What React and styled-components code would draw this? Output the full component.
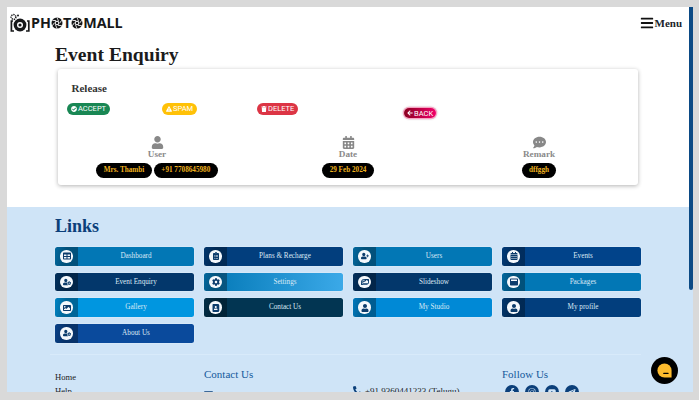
import styled, { createGlobalStyle } from 'styled-components';
import {
  FaAddressBook, FaArrowLeft, FaBars, FaCalendarAlt, FaCheckCircle, FaClipboardList, FaCog,
  FaCommentDots, FaEnvelope, FaExclamationTriangle, FaFacebookF, FaImage, FaImages, FaInstagram,
  FaPhoneAlt, FaTable, FaTelegramPlane, FaTrash, FaUser, FaUserCog, FaUserPlus, FaWindowMaximize,
  FaYoutube,
} from 'react-icons/fa';

const navy = '#0b3f7a';

const links = [
  { label: 'Dashboard', icon: FaTable, bg: '#0277b5' },
  { label: 'Plans & Recharge', icon: FaClipboardList, bg: '#023e7d' },
  { label: 'Users', icon: FaUserPlus, bg: '#0277b5' },
  { label: 'Events', icon: FaCalendarAlt, bg: '#01438a' },
  { label: 'Event Enquiry', icon: FaUserCog, bg: '#03376b' },
  { label: 'Settings', icon: FaCog, bg: 'linear-gradient(90deg, #0277b5, #3ba9e8)' },
  { label: 'Slideshow', icon: FaImages, bg: '#03376b' },
  { label: 'Packages', icon: FaWindowMaximize, bg: '#0277b5' },
  { label: 'Gallery', icon: FaImage, bg: '#0096e0' },
  { label: 'Contact Us', icon: FaAddressBook, bg: '#023552' },
  { label: 'My Studio', icon: FaUser, bg: '#0089d6' },
  { label: 'My profile', icon: FaUser, bg: '#023e7d' },
  { label: 'About Us', icon: FaUserCog, bg: '#0a4a9c' },
];

const GlobalStyle = createGlobalStyle`
  html, body {
    margin: 0;
    height: 100%;
    overflow: hidden;
    background: #d9d9d9;
  }
  body {
    font-family: "Liberation Serif", "Times New Roman", serif;
  }
`;

const Frame = styled.div`
  position: relative;
  margin: 7px 0 0 7px;
  width: 686px;
  height: 385px;
  overflow: hidden;
  background: #fff;
`;

const ScrollThumb = styled.div`
  position: absolute;
  top: 0;
  right: 0;
  width: 4px;
  height: 283px;
  background: #0b4a85;
  border-radius: 0 0 2px 2px;
`;

const Header = styled.header`
  display: flex;
  justify-content: space-between;
  align-items: center;
  height: 31px;
  padding: 0 11px 0 2px;
`;

const Logo = styled.div`
  display: flex;
  align-items: center;
  font-family: "Open Sans", sans-serif;
  font-weight: 700;
  font-size: 14.3px;
  line-height: 20px;
  color: #17181a;
`;

const MenuButton = styled.div`
  display: flex;
  align-items: center;
  gap: 1px;
  font-size: 11px;
  font-weight: 700;
  color: #20232a;
  margin-top: 1px;

  > svg {
    font-size: 14px;
    color: #111;
  }
`;

const Main = styled.main`
  box-sizing: border-box;
  height: 169px;
  padding: 5px 52px 0 48px;
`;

const Title = styled.h1`
  margin: 0 0 2px;
  font-size: 19.6px;
  line-height: 24px;
  font-weight: 700;
  color: #1b1b1b;
`;

const Card = styled.section`
  margin: 0 3px 0 2.5px;
  height: 116px;
  padding: 12px 4px 0 9px;
  box-sizing: border-box;
  background: #fff;
  border-radius: 3px;
  box-shadow: 0 1px 4px rgba(0, 0, 0, 0.3);
`;

const CardTitle = styled.h2`
  margin: 0 0 8px 5px;
  font-size: 11px;
  line-height: 14px;
  font-weight: 700;
  color: #333;
`;

const Actions = styled.div`
  display: grid;
  grid-template-columns: repeat(4, 95px);
  align-items: start;
  height: 23px;
`;

const Badge = styled.span`
  justify-self: start;
  display: inline-flex;
  align-items: center;
  gap: 1.5px;
  height: 11.5px;
  padding: 0 3.5px 0 4px;
  border-radius: 6px;
  background: ${(props) => props.$bg};
  font-family: Roboto, sans-serif;
  font-size: 7.5px;
  color: #fff;

  > svg {
    font-size: 6px;
  }
`;

const BackBadge = styled(Badge)`
  margin: 5px 0 0 52px;
  height: 10px;
  padding: 0 3px;
  background: linear-gradient(90deg, #8b0020, #f0006a);
  box-shadow: 0 0 0 1.2px #f7a3c2, 0 0 2px 1.5px rgba(0, 0, 0, 0.12);
`;

const Details = styled.div`
  display: grid;
  grid-template-columns: repeat(3, 191px);
  margin: 10px 0 0 -5px;
`;

const Detail = styled.div`
  display: flex;
  flex-direction: column;
  align-items: center;
  color: #888;

  > svg {
    font-size: 13px;
  }
`;

const DetailLabel = styled.div`
  font-size: 9.2px;
  line-height: 11px;
  font-weight: 700;
  margin: 0 0 3px;
  color: #8a8a8a;
`;

const Pills = styled.div`
  display: flex;
  gap: 2px;
`;

const Pill = styled.span`
  padding: 0 7.5px;
  line-height: 15px;
  border-radius: 8px;
  background: #000;
  color: #efb21f;
  font-size: 7.2px;
  font-weight: 700;
`;

const LinksSection = styled.section`
  background: #cfe4f7;
  padding: 9px 52px 0 48px;
  height: 200px;
`;

const SectionTitle = styled.h2`
  margin: 0 0 10px;
  font-size: 18px;
  line-height: 21px;
  font-weight: 700;
  color: ${navy};
`;

const LinkGrid = styled.div`
  display: grid;
  grid-template-columns: repeat(4, 139px);
  gap: 7px 10px;
`;

const LinkButton = styled.a`
  display: flex;
  height: 18.7px;
  border-radius: 2.5px;
  overflow: hidden;
  background: ${(props) => props.$bg};
  box-shadow: 0 0 1.5px rgba(255, 255, 255, 0.8);
  color: #dbe9f5;
  font-size: 7.2px;
  line-height: 18.7px;
`;

const LinkIcon = styled.span`
  flex: 0 0 23px;
  display: flex;
  align-items: center;
  justify-content: center;
  background: linear-gradient(100deg, rgba(0, 0, 0, 0.12), rgba(0, 0, 0, 0.32) 45%);
`;

const IconDisc = styled.span`
  display: flex;
  align-items: center;
  justify-content: center;
  width: 12.5px;
  height: 12.5px;
  border-radius: 50%;
  background: #f4f8fc;
  color: #0c3c6c;
  font-size: 8px;
`;

const LinkLabel = styled.span`
  flex: 1;
  text-align: center;
`;

const Divider = styled.hr`
  margin: 11px 0 0 -5px;
  border: 0;
  border-top: 1px solid #d8eafa;
`;

const Footer = styled.footer`
  display: grid;
  grid-template-columns: repeat(4, 139px);
  column-gap: 10px;
  margin-top: 13px;
`;

const FooterColumn = styled.div`
  display: flex;
  flex-direction: column;
  padding-top: ${(props) => props.$top || 0}px;
`;

const FooterLink = styled.a`
  font-size: 8.6px;
  line-height: 14.5px;
  color: #222;
`;

const FooterTitle = styled.h3`
  margin: 0 0 8px;
  font-size: 11px;
  line-height: 13px;
  font-weight: 400;
  color: #14589b;
`;

const ContactRow = styled.div`
  display: flex;
  align-items: center;
  gap: 3px;
  font-size: 9px;
  line-height: 12px;
  color: #222;

  > svg {
    font-size: 9px;
    color: ${navy};
  }
`;

const Socials = styled.div`
  display: flex;
  gap: 6px;
  margin: -4px 0 0 3px;
`;

const Social = styled.a`
  display: flex;
  align-items: center;
  justify-content: center;
  width: 14px;
  height: 14px;
  border-radius: 50%;
  background: ${navy};
  color: #cfe4f7;
  font-size: 8px;
`;

const ChatBubble = styled.button`
  position: fixed;
  left: 651px;
  top: 357px;
  display: flex;
  align-items: center;
  justify-content: center;
  width: 27px;
  height: 27px;
  padding: 0;
  border: 0;
  border-radius: 50%;
  background: #000;
`;

function Aperture({ size = 12 }) {
  return (
    <svg width={size} height={size} viewBox="0 0 24 24">
      <circle cx="12" cy="12" r="11" fill="#17181a" />
      <circle cx="12" cy="12" r="4.5" fill="#fff" />
      {[0, 60, 120, 180, 240, 300].map((a) => (
        <line key={a} x1="12" y1="1" x2="15" y2="8" stroke="#fff" strokeWidth="1.6" transform={`rotate(${a} 12 12)`} />
      ))}
      <circle cx="12" cy="12" r="2.6" fill="#17181a" />
    </svg>
  );
}

function LogoMark() {
  return (
    <svg width="22" height="20" viewBox="0 0 22 20">
      <path d="M4 8H2.4V18H5M18 8h1.8V18H17" fill="none" stroke="#17181a" strokeWidth="1.7" />
      <circle cx="11" cy="12" r="6.4" fill="#17181a" />
      <circle cx="11" cy="12" r="3" fill="#fff" />
      <circle cx="11" cy="12" r="1.6" fill="#17181a" />
      <circle cx="4.5" cy="4" r="2.4" fill="none" stroke="#17181a" strokeWidth="1.5" strokeDasharray="1.2 0.8" />
      <circle cx="9" cy="2.5" r="1" fill="#17181a" />
    </svg>
  );
}

export default function App() {
  return (
    <>
      <GlobalStyle />
      <Frame>
        <Header>
          <Logo>
            <LogoMark />
            <span>PH</span>
            <Aperture />
            <span>T</span>
            <Aperture />
            <span>MALL</span>
          </Logo>
          <MenuButton>
            <FaBars />
            Menu
          </MenuButton>
        </Header>

        <Main>
          <Title>Event Enquiry</Title>
          <Card>
            <CardTitle>Release</CardTitle>
            <Actions>
              <Badge $bg="#198754"><FaCheckCircle />ACCEPT</Badge>
              <Badge $bg="#ffc107"><FaExclamationTriangle />SPAM</Badge>
              <Badge $bg="#dc3545"><FaTrash />DELETE</Badge>
              <BackBadge><FaArrowLeft />BACK</BackBadge>
            </Actions>
            <Details>
              <Detail>
                <FaUser />
                <DetailLabel>User</DetailLabel>
                <Pills>
                  <Pill>Mrs. Thambi</Pill>
                  <Pill>+91 7708645980</Pill>
                </Pills>
              </Detail>
              <Detail>
                <FaCalendarAlt />
                <DetailLabel>Date</DetailLabel>
                <Pill>29 Feb 2024</Pill>
              </Detail>
              <Detail>
                <FaCommentDots />
                <DetailLabel>Remark</DetailLabel>
                <Pill>dffggh</Pill>
              </Detail>
            </Details>
          </Card>
        </Main>

        <LinksSection>
          <SectionTitle>Links</SectionTitle>
          <LinkGrid>
            {links.map(({ label, icon: Icon, bg }) => (
              <LinkButton key={label} $bg={bg}>
                <LinkIcon>
                  <IconDisc><Icon /></IconDisc>
                </LinkIcon>
                <LinkLabel>{label}</LinkLabel>
              </LinkButton>
            ))}
          </LinkGrid>
          <Divider />
          <Footer>
            <FooterColumn $top={2}>
              <FooterLink>Home</FooterLink>
              <FooterLink>Help</FooterLink>
            </FooterColumn>
            <FooterColumn>
              <FooterTitle>Contact Us</FooterTitle>
              <ContactRow><FaEnvelope />info@photomall.in</ContactRow>
            </FooterColumn>
            <FooterColumn $top={17}>
              <ContactRow><FaPhoneAlt />+91 9360441233 (Telugu)</ContactRow>
            </FooterColumn>
            <FooterColumn>
              <FooterTitle>Follow Us</FooterTitle>
              <Socials>
                <Social><FaFacebookF /></Social>
                <Social><FaInstagram /></Social>
                <Social><FaYoutube /></Social>
                <Social><FaTelegramPlane /></Social>
              </Socials>
            </FooterColumn>
          </Footer>
        </LinksSection>
        <ScrollThumb />
      </Frame>
      <ChatBubble aria-label="Chat">
        <svg width="17" height="17" viewBox="0 0 24 24">
          <path d="M12 2a10 10 0 0 1 10 10v10H12a10 10 0 0 1 0-20z" fill="#fdbb2d" />
          <rect x="10" y="15" width="8" height="2" rx="1" fill="#000" />
        </svg>
      </ChatBubble>
    </>
  );
}
